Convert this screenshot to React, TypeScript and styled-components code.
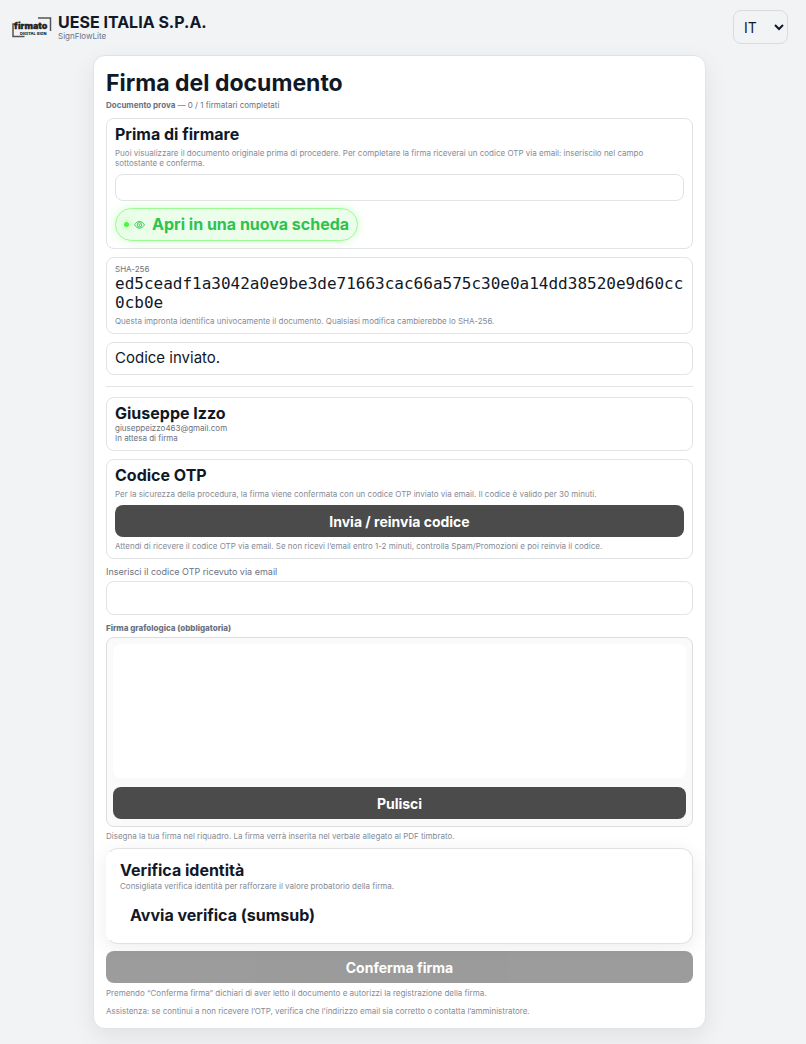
import React from "react";
import styled, { createGlobalStyle } from "styled-components";

const GlobalStyle = createGlobalStyle`
  *, *::before, *::after { box-sizing: border-box; }
  body {
    margin: 0;
    background: #f2f3f5;
    color: #111827;
    font-family: Inter, "Liberation Sans", sans-serif;
    font-size: 16px;
    line-height: 19px;
  }
  button, input, select { font: inherit; color: inherit; }
  h1, h2, p { margin: 0; }
`;

const Header = styled.header`
  display: flex;
  align-items: center;
  justify-content: space-between;
  padding: 10px 18px 11px 12px;
`;

const Brand = styled.div`
  display: flex;
  align-items: center;
  gap: 6px;
`;

const BrandName = styled.div`
  font-weight: 700;
  line-height: 18px;
`;

const BrandProduct = styled.div`
  font-size: 8px;
  line-height: 10px;
  color: #6b7280;
`;

const LanguageSelect = styled.select`
  width: 55px;
  height: 34px;
  padding: 0 0 0 6px;
  border: 1px solid #d9dbdf;
  border-radius: 8px;
  background: transparent;
  font-size: 14px;
`;

const Main = styled.main`
  padding: 0 7px 16px 0;
`;

const Card = styled.div`
  max-width: 613px;
  margin: 0 auto;
  padding: 12px;
  border: 1px solid #e2e3e6;
  border-radius: 12px;
  background: #fff;
  box-shadow: 0 8px 24px rgba(17, 24, 39, 0.08);
`;

const Title = styled.h1`
  font-size: 23px;
  line-height: 30px;
  font-weight: 700;
`;

const Summary = styled.p`
  margin-top: 2px;
  font-size: 8px;
  line-height: 10px;
  color: #6b7280;
`;

const Panel = styled.section`
  margin-top: 8px;
  padding: 6px 8px 7px;
  border: 1px solid #e2e3e5;
  border-radius: 8px;
`;

const PanelTitle = styled.h2`
  font-size: 16px;
  line-height: 19px;
  font-weight: 700;
`;

const Hint = styled.p<{ $gap?: number }>`
  margin-top: ${({ $gap = 4 }) => $gap}px;
  font-size: 8px;
  line-height: 10px;
  color: #858b97;
`;

const Meta = styled.div`
  font-size: 8px;
  line-height: 10px;
  color: #6b7280;
`;

const Preview = styled.div`
  height: 27px;
  margin-top: 6px;
  border: 1px solid #e2e3e5;
  border-radius: 8px;
`;

const OpenLink = styled.a`
  display: inline-flex;
  align-items: center;
  height: 33px;
  margin-top: 7px;
  padding: 0 8px;
  border: 1px solid #9dfa94;
  border-radius: 17px;
  background: #ebfeea;
  box-shadow: 0 0 10px rgba(80, 255, 70, 0.28);
  color: #2fc24e;
  font-weight: 700;
  text-decoration: none;
  vertical-align: top;
`;

const Dot = styled.span`
  width: 5px;
  height: 5px;
  border-radius: 50%;
  background: #4cf542;
  box-shadow: 0 0 8px rgba(57, 255, 20, 0.7);
`;

const EyeIcon = styled.svg`
  margin: 0 7px 0 5px;
`;

const Hash = styled.div`
  font-family: "DejaVu Sans Mono", monospace;
  word-break: break-all;
`;

const Message = styled.p`
  font-size: 15px;
  line-height: 18px;
`;

const Divider = styled.hr`
  height: 1px;
  margin: 11px 0 10px;
  border: 0;
  background: #e2e3e5;
`;

const PrimaryButton = styled.button<{ $gap: number }>`
  display: block;
  width: 100%;
  height: 32px;
  margin-top: ${({ $gap }) => $gap}px;
  padding: 0;
  border: 0;
  border-radius: 8px;
  background: #4b4b4b;
  color: #fff;
  font-size: 14px;
  font-weight: 700;

  &:disabled { opacity: 0.55; }
`;

const FieldLabel = styled.label`
  display: block;
  margin-top: 8px;
  font-size: 9px;
  line-height: 10px;
  color: #6b7280;
`;

const SignatureLabel = styled.p`
  margin-top: 8px;
  font-size: 8px;
  line-height: 10px;
  font-weight: 800;
  color: #6b7280;
`;

const CodeInput = styled.input`
  display: block;
  width: 100%;
  height: 34px;
  margin-top: 4px;
  padding: 0 8px;
  border: 1px solid #e2e3e5;
  border-radius: 8px;
  background: #fff;
`;

const SignatureBox = styled.div`
  margin-top: 4px;
  padding: 6px 6px 7px;
  border: 1px solid #dcdddf;
  border-radius: 8px;
  background: #fafafa;
`;

const SignaturePad = styled.canvas`
  display: block;
  width: 100%;
  height: 134px;
  border-radius: 8px;
  background: #fff;
`;

const IdentityPanel = styled.section`
  margin-top: 7px;
  padding: 12px 13px;
  border: 1px solid #dfe1e2;
  border-left-color: transparent;
  border-radius: 12px;
  background: #fff;
  box-shadow: 0 4px 20px rgba(17, 24, 39, 0.08);
`;

const PlainButton = styled.button`
  height: 32px;
  margin-top: 8px;
  padding: 0 10px;
  border: 0;
  background: transparent;
  font-weight: 700;
  vertical-align: top;
`;

function Logo() {
  return (
    <svg width="40" height="21" viewBox="0 0 40 21" role="img" aria-label="firmato digital sign">
      <path d="M26 1h12.500v13M4 7H1v12.500H12.500" fill="none" stroke="#555" strokeWidth="1.500" />
      <text x="2" y="12" fontFamily="Inter" fontSize="9" fontWeight="900" fill="#222" stroke="#222" strokeWidth="0.3">firmato</text>
      <text x="8" y="18" fontFamily="Inter" fontSize="4" fontWeight="800" fill="#222">DIGITAL SIGN</text>
    </svg>
  );
}

function Eye() {
  return (
    <EyeIcon width="11" height="10" viewBox="0 0 11 10" fill="none" stroke="currentColor" strokeWidth="0.9" aria-hidden="true">
      <path d="M.6 4.800C3 .3 8 .3 10.400 4.800 8 9.300 3 9.300 .6 4.800Z" />
      <circle cx="5.500" cy="4.800" r="2.200" />
      <circle cx="5.500" cy="4.800" r=".5" />
    </EyeIcon>
  );
}

export default function App() {
  return (
    <>
      <GlobalStyle />
      <Header>
        <Brand>
          <Logo />
          <div>
            <BrandName>UESE ITALIA S.P.A.</BrandName>
            <BrandProduct>SignFlowLite</BrandProduct>
          </div>
        </Brand>
        <LanguageSelect aria-label="Lingua" defaultValue="it">
          <option value="it">IT</option>
          <option value="en">EN</option>
        </LanguageSelect>
      </Header>
      <Main>
        <Card>
          <Title>Firma del documento</Title>
          <Summary><strong>Documento prova</strong> — 0 / 1 firmatari completati</Summary>

          <Panel>
            <PanelTitle>Prima di firmare</PanelTitle>
            <Hint>
              Puoi visualizzare il documento originale prima di procedere. Per completare la firma riceverai un codice OTP via email: inseriscilo nel campo sottostante e conferma.
            </Hint>
            <Preview />
            <OpenLink href="#documento"><Dot /><Eye />Apri in una nuova scheda</OpenLink>
          </Panel>

          <Panel>
            <Meta>SHA-256</Meta>
            <Hash>ed5ceadf1a3042a0e9be3de71663cac66a575c30e0a14dd38520e9d60cc0cb0e</Hash>
            <Hint>Questa impronta identifica univocamente il documento. Qualsiasi modifica cambierebbe lo SHA-256.</Hint>
          </Panel>

          <Panel><Message>Codice inviato.</Message></Panel>

          <Divider />

          <Panel>
            <PanelTitle>Giuseppe Izzo</PanelTitle>
            <Meta>giuseppeizzo463@gmail.com</Meta>
            <Meta>In attesa di firma</Meta>
          </Panel>

          <Panel>
            <PanelTitle>Codice OTP</PanelTitle>
            <Hint>Per la sicurezza della procedura, la firma viene confermata con un codice OTP inviato via email. Il codice è valido per 30 minuti.</Hint>
            <PrimaryButton type="button" $gap={6}>Invia / reinvia codice</PrimaryButton>
            <Hint>Attendi di ricevere il codice OTP via email. Se non ricevi l’email entro 1-2 minuti, controlla Spam/Promozioni e poi reinvia il codice.</Hint>
          </Panel>

          <FieldLabel htmlFor="otp">Inserisci il codice OTP ricevuto via email</FieldLabel>
          <CodeInput id="otp" inputMode="numeric" />

          <SignatureLabel id="signature-label">Firma grafologica (obbligatoria)</SignatureLabel>
          <SignatureBox>
            <SignaturePad aria-labelledby="signature-label" />
            <PrimaryButton type="button" $gap={9}>Pulisci</PrimaryButton>
          </SignatureBox>
          <Hint>Disegna la tua firma nel riquadro. La firma verrà inserita nel verbale allegato al PDF timbrato.</Hint>

          <IdentityPanel>
            <PanelTitle>Verifica identità</PanelTitle>
            <Hint $gap={1}>Consigliata verifica identità per rafforzare il valore probatorio della firma.</Hint>
            <PlainButton type="button">Avvia verifica (sumsub)</PlainButton>
          </IdentityPanel>

          <PrimaryButton type="button" $gap={7} disabled>Conferma firma</PrimaryButton>
          <Hint $gap={5}>Premendo “Conferma firma” dichiari di aver letto il documento e autorizzi la registrazione della firma.</Hint>
          <Hint $gap={8}>Assistenza: se continui a non ricevere l’OTP, verifica che l’indirizzo email sia corretto o contatta l’amministratore.</Hint>
        </Card>
      </Main>
    </>
  );
}
